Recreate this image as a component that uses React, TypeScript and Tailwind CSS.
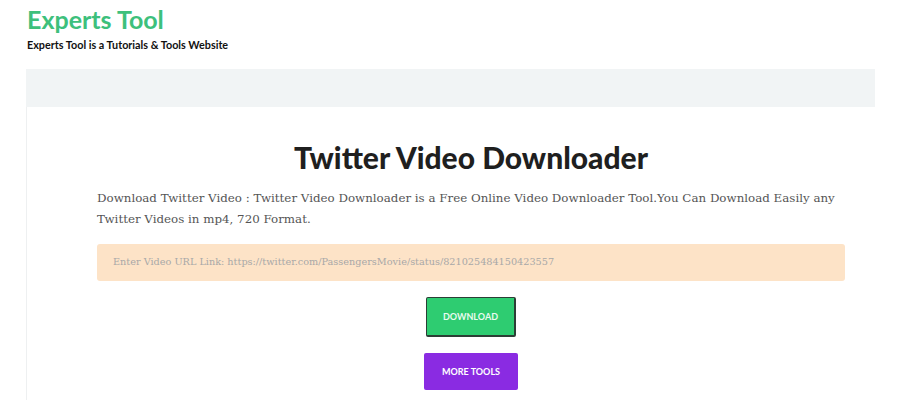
export default function App() {
  return (
    <div className="min-h-[400px] bg-white font-['Lato',sans-serif]">
      {/* Header */}
      <header className="px-[27px] pt-[5px]">
        <h1 className="text-[25px] font-bold leading-[28px] text-[#3dc07c]">Experts Tool</h1>
        <p className="mt-[5px] text-[10.8px] font-bold leading-[14px] text-[#111]">
          Experts Tool is a Tutorials &amp; Tools Website
        </p>
      </header>

      {/* Panel */}
      <div className="mx-[26px] mt-[17px] w-[849px]">
        <div className="h-[38px] bg-[#f1f4f5]" />
        <div className="border-l border-[#eef0f1] pb-[10px] pl-[70px] pr-[30px] pt-[32px]">
          <h2 className="text-center text-[30px] font-black leading-[36px] text-[#1f1f1f]">
            Twitter Video Downloader
          </h2>
          <p className="mt-[13px] font-['DejaVu_Serif',serif] text-[11.85px] leading-[21px] text-[#555]">
            Download Twitter Video : Twitter Video Downloader is a Free Online Video Downloader Tool.You Can Download Easily any Twitter Videos in mp4, 720 Format.
          </p>
          <div className="mt-[14px] flex h-[37px] w-[748px] items-center rounded-[3px] bg-[#fde3c7] px-[16px]">
            <input
              className="w-full bg-transparent font-['DejaVu_Serif',serif] text-[9.7px] text-[#999] outline-none placeholder:text-[#a8a8a8]"
              placeholder="Enter Video URL Link: https://twitter.com/PassengersMovie/status/821025484150423557"
            />
          </div>
          <div className="mt-[16px] flex flex-col items-center gap-[16px]">
            <button className="h-[40px] w-[90px] rounded-[2px] border-b-2 border-r-2 border-l border-t border-[#2c3e35] bg-[#2ecc71] text-[9px] font-bold text-[#e8fbef]">
              DOWNLOAD
            </button>
            <button className="h-[37px] w-[94px] rounded-[2px] bg-[#8a2be2] text-[9px] font-bold text-white">
              MORE TOOLS
            </button>
          </div>
        </div>
      </div>
    </div>
  );
}
